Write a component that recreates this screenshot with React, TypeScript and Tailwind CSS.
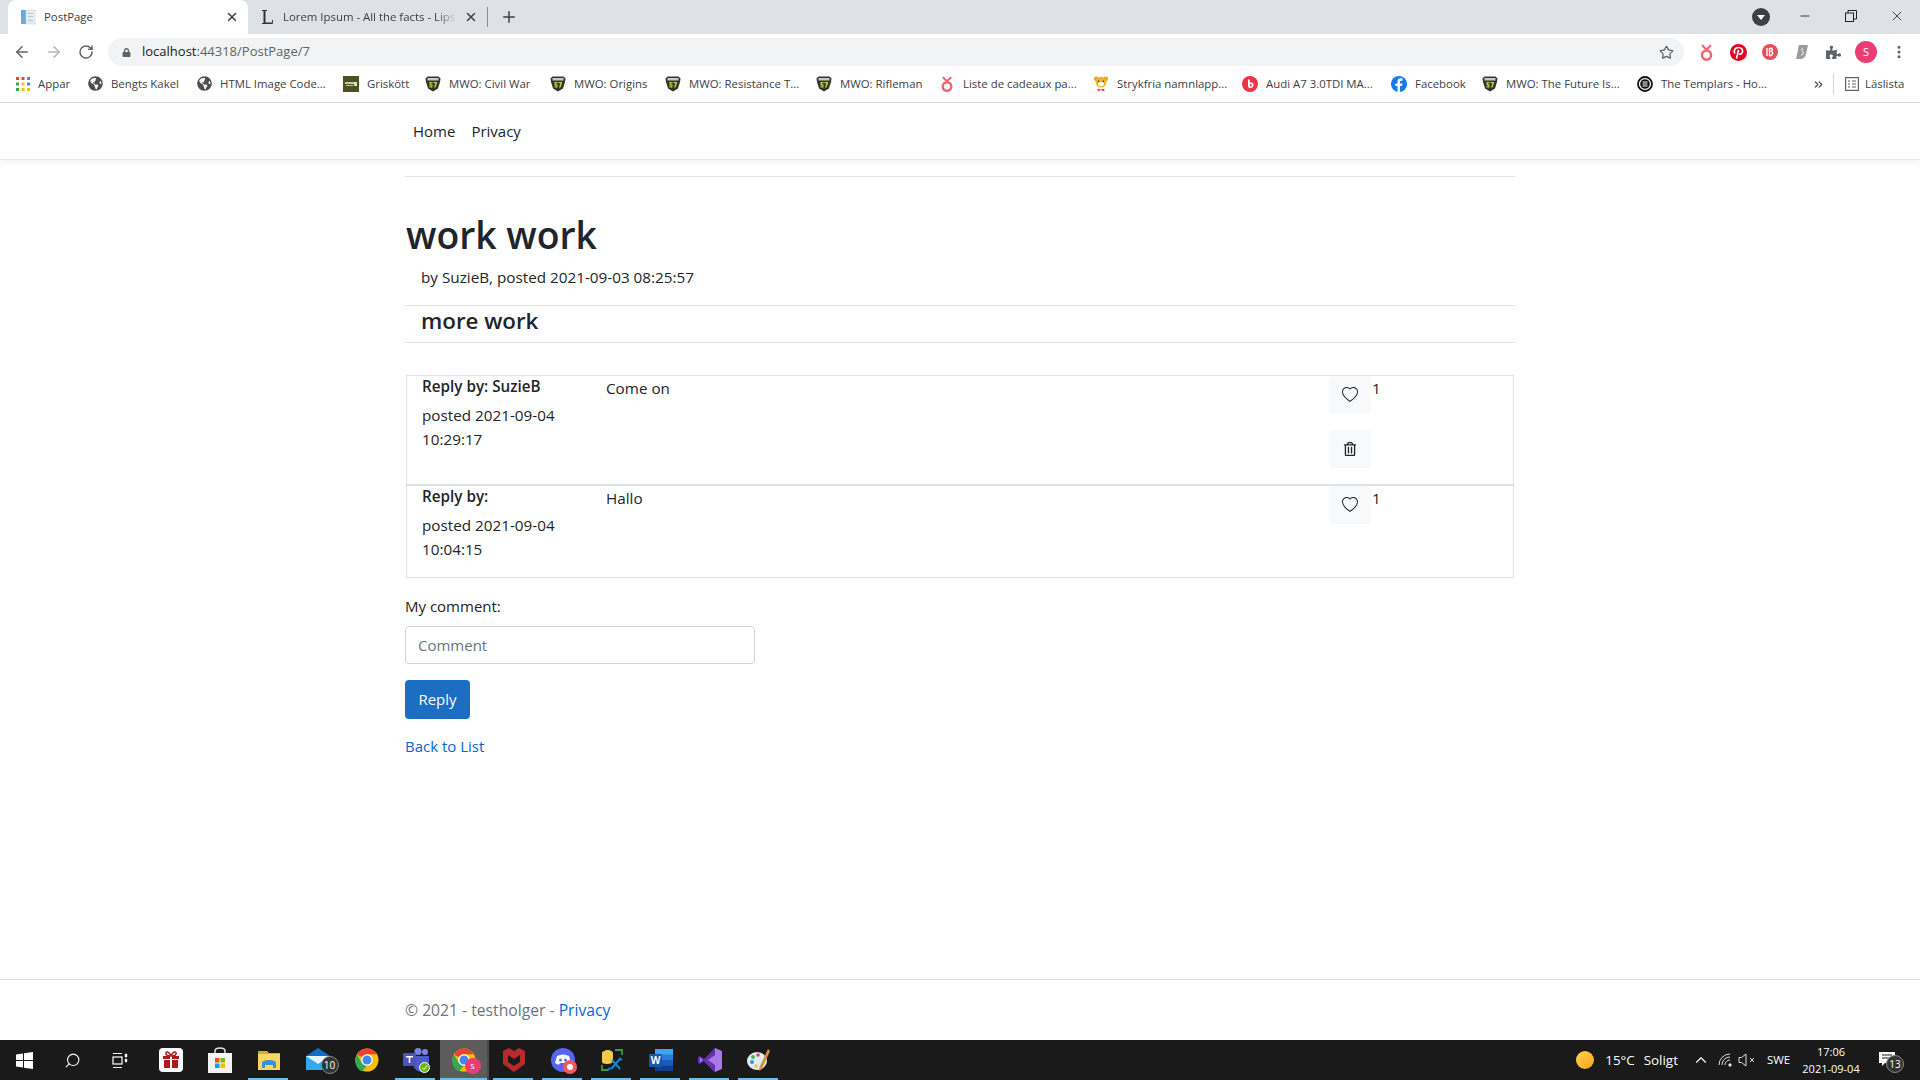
import React from "react";
import { ArrowLeft, ArrowRight, RotateCw, Star, Plus, X, Minus, EllipsisVertical, ChevronUp, ChevronsRight, Search } from "lucide-react";
import { BsHeart } from "react-icons/bs";
import { FaRegTrashAlt, FaPuzzlePiece, FaLock, FaGlobeAmericas } from "react-icons/fa";

const Apps = () => (
  <svg width="15" height="15" viewBox="0 0 15 15">
    {[0, 1, 2].flatMap((r) =>
      [0, 1, 2].map((c) => (
        <rect key={`${r}${c}`} x={c * 5.5 + 1} y={r * 5.5 + 1} width="3" height="3"
          fill={[["#ea4335", "#ea4335", "#4285f4"], ["#34a853", "#fbbc04", "#4285f4"], ["#34a853", "#fbbc04", "#fbbc04"]][r][c]} />
      ))
    )}
  </svg>
);
const Globe = () => <FaGlobeAmericas size={15} color="#4a4d50" />;
const Grisk = () => (
  <svg width="16" height="16" viewBox="0 0 16 16"><rect width="16" height="16" fill="#4c5320" /><rect x="2" y="6" width="9" height="2" fill="#c9cba8" /><rect x="3" y="9" width="7" height="1" fill="#c9cba8" /><path d="M11 6h3v4h-3z" fill="#e0e0c8" /></svg>
);
const Mwo = () => (
  <svg width="16" height="16" viewBox="0 0 16 16">
    <path d="M.5 2.500 2.500.5h11l2 2-.5 3.500-2 6.500L8 15.500 3 12.500 1 6z" fill="#34352f" />
    <rect x="2.500" y="2" width="11" height="2.500" fill="#c9c9c0" />
    <path d="M4.500 6h3v1.200H5.800v1H7.500v3.300h-3v-1.200h1.800v-.9H4.500zM8.500 6H12v1.200L10.500 11.500H9l1.400-4.300H8.500z" fill="#c4cc45" />
  </svg>
);
const Ribbon = ({ size = 14 }: { size?: number }) => (
  <svg width={size} height={size + 2} viewBox="0 0 14 16">
    <circle cx="7" cy="10.500" r="4.300" fill="none" stroke="#f0656f" strokeWidth="2.400" />
    <path d="M3 1c1 2 2.500 3 4 4 1.500-1 3-2 4-4" fill="none" stroke="#f0656f" strokeWidth="2" />
  </svg>
);
const Bear = () => (
  <svg width="17" height="17" viewBox="0 0 17 17">
    <circle cx="3.500" cy="3.500" r="2.500" fill="#e8a125" /><circle cx="13.500" cy="3.500" r="2.500" fill="#e8a125" />
    <circle cx="8.500" cy="7" r="5.800" fill="#f1b02e" /><ellipse cx="8.500" cy="9" rx="3" ry="2.300" fill="#fff" />
    <circle cx="6" cy="6" r=".8" fill="#333" /><circle cx="11" cy="6" r=".8" fill="#333" />
    <path d="M5 14l3.500 1 3.500-1v3l-3.500-1.500L5 17z" fill="#dc3b3b" />
  </svg>
);
const RedB = () => (
  <svg width="16" height="16" viewBox="0 0 16 16"><circle cx="8" cy="8" r="8" fill="#ee3347" /><path d="M6 3.500h1.800v3.200C9.800 5.700 11.500 7 11.500 9s-1.600 3.300-3 3.300S6 11.200 6 9.500zM7.800 9.200c0 .7.400 1.300 1 1.300s1-.6 1-1.300-.4-1.300-1-1.300-1 .6-1 1.300z" fill="#fff" /></svg>
);
const Fb = () => (
  <svg width="16" height="16" viewBox="0 0 16 16"><circle cx="8" cy="8" r="8" fill="#1877f2" /><path d="M9 16V10h2l.4-2.500H9V6c0-.8.300-1.300 1.400-1.300h1.100V2.500C11.100 2.400 10.400 2.300 9.700 2.300 7.700 2.300 6.500 3.500 6.500 5.600v1.900H4.300V10h2.200v6z" fill="#fff" /></svg>
);
const Templars = () => (
  <svg width="16" height="16" viewBox="0 0 16 16"><circle cx="8" cy="8" r="7" fill="#fff" stroke="#111" strokeWidth="1.800" /><circle cx="8" cy="8" r="4.800" fill="#111" /><path d="M5.500 5.500h5v1h-5zM5.500 7.500h5v1h-5zM5.500 9.500h5v1h-5z" fill="#fff" /></svg>
);

const bookmarks: { w: string; icon: React.ReactNode; label: string }[] = [
  { w: "w-[73px]", icon: <Apps />, label: "Appar" },
  { w: "w-[109px]", icon: <Globe />, label: "Bengts Kakel" },
  { w: "w-[147px]", icon: <Globe />, label: "HTML Image Code..." },
  { w: "w-[82px]", icon: <Grisk />, label: "Grisk\u00f6tt" },
  { w: "w-[125px]", icon: <Mwo />, label: "MWO: Civil War" },
  { w: "w-[115px]", icon: <Mwo />, label: "MWO: Origins" },
  { w: "w-[151px]", icon: <Mwo />, label: "MWO: Resistance T..." },
  { w: "w-[123px]", icon: <Mwo />, label: "MWO: Rifleman" },
  { w: "w-[154px]", icon: <Ribbon />, label: "Liste de cadeaux pa..." },
  { w: "w-[149px]", icon: <Bear />, label: "Strykfria namnlapp..." },
  { w: "w-[149px]", icon: <RedB />, label: "Audi A7 3.0TDI MA..." },
  { w: "w-[91px]", icon: <Fb />, label: "Facebook" },
  { w: "w-[155px]", icon: <Mwo />, label: "MWO: The Future Is..." },
  { w: "w-[173px]", icon: <Templars />, label: "The Templars - Ho..." },
];

const PostPageFav = () => (
  <svg width="16" height="16" viewBox="0 0 16 16"><rect x="1" y="1" width="5" height="14" fill="#6fa8dc" /><rect x="6" y="1" width="9" height="14" fill="#e8eef4" stroke="#c5d3e0" strokeWidth=".6" /><rect x="8" y="4" width="5" height="1" fill="#b8c8d8" /><rect x="8" y="7" width="5" height="1" fill="#b8c8d8" /><rect x="8" y="10" width="5" height="3" fill="#d0dce8" /></svg>
);
const LFav = () => (
  <svg width="16" height="16" viewBox="0 0 16 16"><path d="M3 1h5v1H6.500v11.500H13V11h1l-.300 4H3v-1h1.500V2H3z" fill="#333" /></svg>
);

const TabBar = () => (
  <div className="flex h-[34px] items-end bg-[#dee1e6] pl-[8px] text-[#3c4043]">
    <div className="flex h-[34px] w-[240px] items-center rounded-t-lg bg-white pl-[12px] pr-[9px]">
      <PostPageFav />
      <span className="ml-[8px] flex-1 text-[11.4px]">PostPage</span>
      <X size={14} strokeWidth={2.5} />
    </div>
    <div className="flex h-[34px] w-[239px] items-center pl-[11px] pr-[9px]">
      <LFav />
      <span className="ml-[8px] w-[174px] whitespace-nowrap text-[11.4px] [mask-image:linear-gradient(to_right,black_88%,transparent)]">Lorem Ipsum - All the facts - Lips</span>
      <X size={14} strokeWidth={2.5} className="ml-auto" />
    </div>
    <div className="mb-[7px] h-[20px] w-px bg-[#8a8d91]" />
    <Plus size={18} strokeWidth={2} className="mb-[8px] ml-[12px]" />
    <div className="mb-[8px] ml-auto flex h-[18px] w-[18px] items-center justify-center rounded-full bg-[#3c4043]">
      <div className="h-0 w-0 border-x-[4px] border-t-[5px] border-x-transparent border-t-white" />
    </div>
    <div className="mb-[10px] ml-[28px] flex w-[122px] items-center justify-between pr-[15px] text-[#222]">
      <Minus size={14} strokeWidth={1.5} />
      <svg width="12" height="12" viewBox="0 0 12 12" fill="none" stroke="#222"><rect x=".5" y="3" width="8" height="8.500" /><path d="M3 3V.5h8.500V9H8.500" /></svg>
      <X size={16} strokeWidth={1.2} />
    </div>
  </div>
);

const Toolbar = () => (
  <div className="flex h-[33px] items-center bg-white pt-[3px] text-[#5f6368]">
    <div className="flex w-[108px] items-center pl-[13px]">
      <ArrowLeft size={18} strokeWidth={2} />
      <ArrowRight size={18} strokeWidth={2} color="#b4b6b9" className="ml-[14px]" />
      <RotateCw size={16} strokeWidth={2.2} className="ml-[15px]" />
    </div>
    <div className="flex h-[28px] w-[1576px] items-center rounded-full bg-[#f1f3f4] pl-[14px] pr-[10px]">
      <FaLock size={9} color="#5f6368" />
      <span className="ml-[11px] flex-1 text-[13px]"><span className="text-[#202124]">localhost</span><span className="text-[#5f6368]">:44318/PostPage/7</span></span>
      <Star size={15} strokeWidth={2} />
    </div>
    <div className="flex flex-1 items-center">
      <div className="flex w-[30px] justify-end"><Ribbon size={15} /></div>
      <div className="ml-[16px] flex h-[17px] w-[17px] items-center justify-center rounded-full bg-[#e60023]">
        <svg width="11" height="13" viewBox="0 0 11 13" fill="none" stroke="#fff" strokeWidth="1.700"><path d="M2 7.500C.5 5.500 1.500 1.500 5.500 1.500c3 0 4.300 2 4 4-.3 2-2 3.200-3.500 2.500M5.500 4 3.500 12.500" /></svg>
      </div>
      <div className="ml-[15px] flex h-[16px] w-[16px] items-center justify-center rounded-full bg-[#e2515a]">
        <svg width="10" height="10" viewBox="0 0 10 10" fill="none" stroke="#fff" strokeWidth="1.300"><path d="M2 1v8M4.500 9V1.500c3-1 4 2 1 3 3-.5 3 4-1 4.500" /></svg>
      </div>
      <svg width="16" height="16" viewBox="0 0 16 16" className="ml-[16px]"><path d="M5 1h9l-2 9c-.5 3-3 5-6 5H2l2-9C4.300 3.500 4.500 1 5 1z" fill="#9a9c9e" /><path d="M9 4c-2 1-1 3 0 4s0 3-2 3" stroke="#fff" fill="none" strokeWidth="1" /></svg>
      <FaPuzzlePiece size={15} color="#5f6368" className="ml-[16px]" />
      <div className="ml-[14px] flex h-[22px] w-[22px] items-center justify-center rounded-full bg-[#ea3d76] text-[11px] text-white">S</div>
      <EllipsisVertical size={16} strokeWidth={2.6} className="ml-[14px]" />
    </div>
  </div>
);

const BookmarkBar = () => (
  <div className="flex h-[36px] items-center border-b border-[#d9d9d9] bg-white pb-[1px] pl-[14px] text-[11.4px] text-[#3c4043]">
    {bookmarks.map((b) => (
      <div key={b.label} className={`flex items-center whitespace-nowrap ${b.w}`}>
        <span className="flex w-[16px] shrink-0 justify-center">{b.icon}</span>
        <span className="ml-[8px]">{b.label}</span>
      </div>
    ))}
    <ChevronsRight size={13} className="ml-[2px]" />
    <div className="ml-[8px] h-[20px] w-px bg-[#d0d2d5]" />
    <svg width="14" height="14" viewBox="0 0 14 14" fill="none" stroke="#5f6368" strokeWidth="1.200" className="ml-[11px]"><rect x=".6" y=".6" width="12.800" height="12.800" /><path d="M3 4h2M7 4h4M3 7h2M7 7h4M3 10h2M7 10h4" /></svg>
    <span className="ml-[6px]">L&auml;slista</span>
  </div>
);

const Reply = ({ by, date, time, text, del }: { by: string; date: string; time: string; text: string; del?: boolean }) => (
  <div className="flex pb-[16px] pl-[15px] text-[15.25px]">
    <div className="w-[184px] leading-6">
      <div className="h-[20px] font-semibold leading-[20px]">{by}</div>
      <div className="mt-[7px]">{date}<br />{time}</div>
    </div>
    <div className="w-[723px] leading-6">{text}</div>
    <div className="flex w-[42px] flex-col gap-[16px]">
      <button className="flex h-[38px] w-[42px] items-center justify-center rounded bg-[#f8f9fa] text-[#212529]"><BsHeart size={16} /></button>
      {del && <button className="flex h-[38px] w-[42px] items-center justify-center rounded bg-[#f8f9fa] text-[#212529]"><FaRegTrashAlt size={14} /></button>}
    </div>
    <div className="ml-[1px] leading-6">1</div>
  </div>
);

const Chrome = ({ size = 24 }: { size?: number }) => (
  <svg width={size} height={size} viewBox="0 0 24 24">
    <circle cx="12" cy="12" r="11.500" fill="#fbbc04" />
    <path d="M12 .5a11.500 11.500 0 0 1 10 5.750H12a5.750 5.750 0 0 0-5 2.900L2 6.500A11.500 11.500 0 0 1 12 .5z" fill="#ea4335" />
    <path d="M2 6.500l5 8.600a5.750 5.750 0 0 0 5 2.650L7 23.400A11.500 11.500 0 0 1 2 6.500z" fill="#34a853" />
    <circle cx="12" cy="12" r="5.800" fill="#fff" /><circle cx="12" cy="12" r="4.500" fill="#4285f4" />
  </svg>
);

const Slot = ({ children, active, on, divider }: { children: React.ReactNode; active?: boolean; on?: boolean; divider?: boolean }) => (
  <div className={`relative flex h-[40px] w-[49px] shrink-0 items-center justify-center ${active ? "bg-[#5c5c5c]" : ""} ${divider ? "border-r-[2px] border-[#4a4a4a]" : ""}`}>
    {children}
    {on && <div className={`absolute bottom-0 h-[2px] bg-[#76b9ed] ${active ? "inset-x-0" : "left-[4px] right-[5px]"}`} />}
  </div>
);

const Badge = ({ n, cls }: { n: string; cls: string }) => (
  <div className={`absolute flex h-[18px] w-[18px] items-center justify-center rounded-full border border-[#888] bg-[#333] text-[10px] text-white ${cls}`}>{n}</div>
);

const Taskbar = () => (
  <div className="flex h-[40px] items-center bg-[#1a1a1a] text-white">
    <div className="flex w-[48px] justify-center">
      <svg width="17" height="17" viewBox="0 0 17 17" fill="#fff"><path d="M0 2.500 7 1.500v6.500H0zM8 1.300 17 0v8H8zM0 9h7v6.500L0 14.500zM8 9h9v8l-9-1.300z" /></svg>
    </div>
    <div className="flex w-[48px] justify-center"><Search size={17} strokeWidth={1.5} className="-scale-x-100" /></div>
    <div className="flex w-[48px] justify-center">
      <svg width="16" height="17" viewBox="0 0 16 17" fill="none" stroke="#fff" strokeWidth="1.200"><path d="M1 1.500h9M1 15.500h9" /><rect x="1" y="5" width="9" height="7" /><path d="M13 2h2v3h-2zM13 7h2v3h-2z" fill="#fff" strokeWidth=".4" /></svg>
    </div>
    <div className="w-[2px]" />
    <Slot>
      <div className="flex h-[24px] w-[24px] items-center justify-center rounded-[4px] bg-white">
        <svg width="18" height="20" viewBox="0 0 18 20"><path d="M9 6C7 1 3 1 4 4c.5 1.500 3 2 5 2zm0 0c2-5 6-5 5-2-.5 1.500-3 2-5 2z" fill="none" stroke="#b0181e" strokeWidth="1.500" /><path d="M1 6h7v3H1zM10 6h7v3h-7zM2 10h6v8H2zM10 10h6v8h-6z" fill="#b0181e" /></svg>
      </div>
    </Slot>
    <Slot>
      <svg width="24" height="26" viewBox="0 0 24 26"><path d="M7 7V4c0-4 10-4 10 0v3" fill="none" stroke="#e0e0e0" strokeWidth="1.500" /><rect y="6" width="24" height="20" fill="#f3f3f3" /><rect x="7" y="11" width="4.500" height="4.500" fill="#f25022" /><rect x="12.500" y="11" width="4.500" height="4.500" fill="#7fba00" /><rect x="7" y="16.500" width="4.500" height="4.500" fill="#00a4ef" /><rect x="12.500" y="16.500" width="4.500" height="4.500" fill="#ffb900" /></svg>
    </Slot>
    <Slot on>
      <svg width="22" height="20" viewBox="0 0 22 20"><path d="M0 1h9l2 2h11v17H0z" fill="#e2a52d" /><rect y="4" width="22" height="16" fill="#fbd660" /><path d="M4 18v-5c0-2 3-3 7-3s7 1 7 3v5h-3v-3H7v3z" fill="#3d8fd6" /></svg>
    </Slot>
    <Slot>
      <div className="relative">
        <svg width="24" height="24" viewBox="0 0 24 24"><path d="M0 8 12 0l12 8z" fill="#0f6fc6" /><rect y="8" width="24" height="14" fill="#31a9ee" /><path d="M0 8l12 8 12-8z" fill="#e6f4fc" /></svg>
        <Badge n="10" cls="-right-[9px] top-[8px]" />
      </div>
    </Slot>
    <Slot><Chrome /></Slot>
    <Slot on>
      <div className="relative h-[24px] w-[26px]">
        <svg width="26" height="24" viewBox="0 0 26 24"><circle cx="22" cy="4" r="3" fill="#7b83eb" /><circle cx="15" cy="3.500" r="3.500" fill="#7b83eb" /><path d="M9 8h17v9c0 5-4 7-7 7s-7-2-8-5z" fill="#5059c9" /><rect y="5" width="13" height="13" rx="1" fill="#4b53bc" /><path d="M3 8h7v1.500H7.300V15H5.700V9.500H3z" fill="#fff" /></svg>
        <div className="absolute -bottom-[1px] -right-[1px] flex h-[11px] w-[11px] items-center justify-center rounded-full border border-white bg-[#6bb700]">
          <svg width="7" height="7" viewBox="0 0 7 7" fill="none" stroke="#fff"><path d="M1 3.500 3 5.500 6 1.500" /></svg>
        </div>
      </div>
    </Slot>
    <Slot on active divider>
      <div className="relative">
        <Chrome />
        <div className="absolute -bottom-[2px] -right-[5px] flex h-[16px] w-[16px] items-center justify-center rounded-full bg-[#ea3d76] text-[8px]">S</div>
      </div>
    </Slot>
    <Slot on>
      <svg width="22" height="24" viewBox="0 0 22 24"><path d="M0 3 6 0l5 3 5-3 6 3v13l-11 8L0 16z" fill="#b72a2c" /><path d="M5 7v7l6 4 6-4V7l-6 4z" fill="#1a1a1a" /></svg>
    </Slot>
    <Slot on>
      <div className="relative">
        <svg width="24" height="24" viewBox="0 0 24 24"><circle cx="12" cy="12" r="12" fill="#5865f2" /><path d="M6 8c4-2 8-2 12 0l2 7c-1.500 1-3 1.500-4 1.500l-1-1.500h-6l-1 1.500c-1 0-2.500-.5-4-1.500z" fill="#fff" /><circle cx="9.500" cy="12" r="1.500" fill="#5865f2" /><circle cx="14.500" cy="12" r="1.500" fill="#5865f2" /></svg>
        <div className="absolute -bottom-[2px] -right-[2px] flex h-[14px] w-[14px] items-center justify-center rounded-full bg-[#f05a5f]"><div className="h-[6px] w-[6px] rounded-full bg-white" /></div>
      </div>
    </Slot>
    <Slot on>
      <svg width="24" height="24" viewBox="0 0 24 24" fill="none"><path d="M2 14c0 0 0-8 0-9s3-3 6-3 5 2 5 3v8c0 2-3 3-6 3s-5-1-5-2z" fill="#f2c94c" /><path d="M15 2h7v5M2 17v5h6" stroke="#3c9a42" strokeWidth="1.800" /><path d="M11 21 20 11M12 12l8 9M19 10l3 2M10 20l-2 2" stroke="#1a86d0" strokeWidth="2" /></svg>
    </Slot>
    <Slot on>
      <svg width="24" height="22" viewBox="0 0 24 22"><path d="M6 0h18v22H6z" fill="#2b7cd3" /><rect x="6" width="18" height="5.500" fill="#41a5ee" /><rect x="6" y="11" width="18" height="5.500" fill="#185abd" /><rect x="6" y="16.500" width="18" height="5.500" fill="#103f91" /><rect y="5" width="13" height="13" rx="1" fill="#1657b0" /><text x="6.500" y="15" textAnchor="middle" fontSize="10" fontWeight="700" fill="#fff" fontFamily="Open Sans">W</text></svg>
    </Slot>
    <Slot on>
      <svg width="24" height="24" viewBox="0 0 24 24"><path d="M17 0l7 3v18l-7 3L6 13z" fill="#a879e8" /><path d="M17 0 6 11 2 8 0 9v6l2 1 4-3 11 11V17l-7-5 7-5z" fill="#6a2eb0" /><path d="M2 9.500 5 12l-3 2.500z" fill="#a879e8" /></svg>
    </Slot>
    <Slot on>
      <svg width="24" height="24" viewBox="0 0 24 24"><ellipse cx="10" cy="13" rx="10" ry="9" fill="#e0eef4" /><circle cx="6" cy="9" r="2" fill="#58b04f" /><circle cx="11" cy="7" r="1.800" fill="#e0503a" /><circle cx="5" cy="14" r="2" fill="#3d8fd6" /><circle cx="9" cy="18" r="1.700" fill="#e8c33a" /><path d="M21 1l2 2-8 18-3 2 .5-4z" fill="#d9903a" /></svg>
    </Slot>
    <div className="ml-auto flex items-center text-[12px]">
      <div className="h-[18px] w-[18px] rounded-full bg-gradient-to-br from-[#ffd54a] to-[#f9a21a]" />
      <span className="ml-[11px] text-[13.4px]">15&deg;C</span>
      <span className="ml-[9px] text-[13.4px]">Soligt</span>
      <ChevronUp size={18} strokeWidth={1.5} className="ml-[14px]" />
      <svg width="14" height="14" viewBox="0 0 14 14" fill="none" stroke="#ddd" strokeWidth="1" className="ml-[8px]"><path d="M1 12a11 11 0 0 1 11-11M4 12a8 8 0 0 1 8-8M7 12a5 5 0 0 1 5-5" /><circle cx="12" cy="12" r="1.200" fill="#fff" /></svg>
      <svg width="18" height="14" viewBox="0 0 18 14" fill="none" stroke="#ddd" strokeWidth="1" className="ml-[6px]"><path d="M1 4.500h2.500L8 1v12L3.500 9.500H1zM12 5l4 4M16 5l-4 4" /></svg>
      <span className="ml-[11px] text-[11.4px]">SWE</span>
      <div className="ml-[11px] flex w-[60px] flex-col items-center text-[11px] leading-[17px]">
        <span>17:06</span>
        <span>2021-09-04</span>
      </div>
      <div className="relative ml-[18px] mr-[25px] h-[16px] w-[16px]">
        <svg width="16" height="14" viewBox="0 0 16 14" fill="#fff"><path d="M0 0h16v11H6l-3 3v-3H0z" /><path d="M3 3h10M3 6h10" stroke="#1a1a1a" /></svg>
        <Badge n="13" cls="-right-[9px] top-[3px]" />
      </div>
    </div>
  </div>
);

export default function App() {
  return (
    <div className="flex h-[1080px] w-[1920px] flex-col overflow-hidden bg-white font-['Open_Sans',sans-serif] text-[15px] text-[#212529]">
      <TabBar />
      <Toolbar />
      <BookmarkBar />
      <nav className="z-10 h-[57px] border-b border-[#e8e8e8] shadow-[0_2px_6px_rgba(0,0,0,0.06)]">
        <div className="mx-auto flex h-[56px] w-[1110px] items-center pl-[8px]">
          <a>Home</a>
          <a className="ml-[16px]">Privacy</a>
        </div>
      </nav>
      <main className="mx-auto w-[1110px] flex-1 pt-[16px]">
        <div className="border-t border-[#e3e3e3]" />
        <h1 className="mt-[34px] pl-[1px] text-[37.3px] font-semibold leading-[48px]">work work</h1>
        <p className="pl-[16px] pt-[6px] text-[15.25px] leading-6">by SuzieB, posted 2021-09-03 08:25:57</p>
        <div className="mt-[16px] border-t border-[#e3e3e3]" />
        <h2 className="h-[36px] pl-[16px] text-[22.3px] font-semibold leading-[30px]">more work</h2>
        <div className="border-t border-[#e3e3e3]" />
        <div className="ml-[1px] mt-[32px] w-[1108px] border border-[#dee2e6]">
          <Reply by="Reply by: SuzieB" date="posted 2021-09-04" time="10:29:17" text="Come on" del />
          <div className="border-t-[2px] border-[#dee2e6]" />
          <Reply by="Reply by:" date="posted 2021-09-04" time="10:04:15" text="Hallo" />
        </div>
        <label className="mt-[16px] block leading-6">My comment:</label>
        <input placeholder="Comment" className="mt-[8px] block h-[38px] w-[350px] rounded border border-[#ced4da] px-[12px] placeholder:text-[#6c757d]" />
        <button className="mt-[16px] block h-[39px] w-[65px] rounded bg-[#1b6ec2] text-white">Reply</button>
        <a className="mt-[15px] block leading-6 text-[#0366d6]">Back to List</a>
      </main>
      <footer className="h-[61px] border-t border-[#dee2e6]">
        <div className="mx-auto w-[1110px] pt-[18px] text-[15.7px] leading-6 text-[#6c757d]">&copy; 2021 - testholger - <a className="text-[#0366d6]">Privacy</a></div>
      </footer>
      <Taskbar />
    </div>
  );
}
